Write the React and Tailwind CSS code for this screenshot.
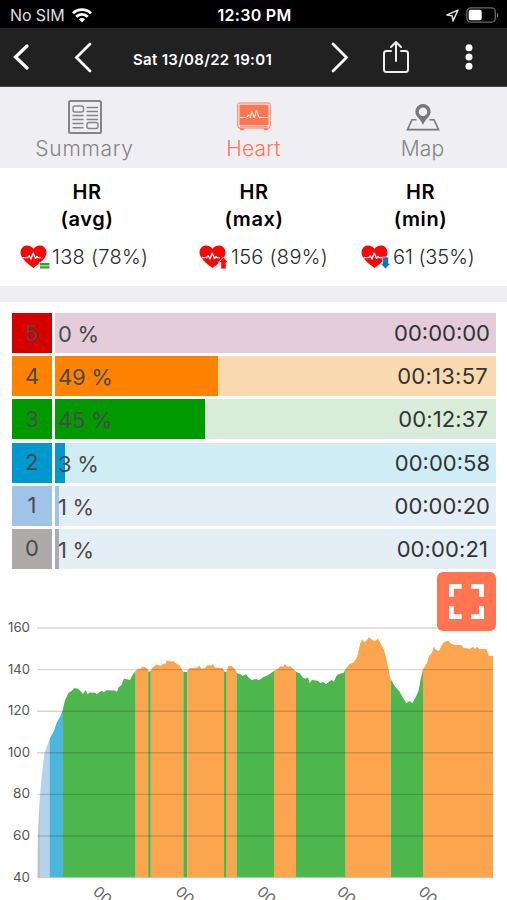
const tabs = [
    { label: 'Summary', Icon: SummaryIcon, tracking: 'tracking-[0.7px]' },
    { label: 'Heart', Icon: MonitorIcon, active: true, tracking: 'tracking-[0.2px]' },
    { label: 'Map', Icon: MapIcon, tracking: 'tracking-[0.2px]' },
];

const stats = [
    { name: '(avg)', value: '138 (78%)', kind: 'avg', box: 'w-[174px]', row: 'pl-5', tracking: 'tracking-[0.3px]' },
    { name: '(max)', value: '156 (89%)', kind: 'max', box: 'w-[160px]', row: 'pl-[25px]', tracking: 'tracking-[0.3px]' },
    { name: '(min)', value: '61 (35%)', kind: 'min', box: 'w-[173px]', row: 'pl-[27px]', tracking: 'tracking-[-0.05px]' },
];

const zones = [
    { id: 5, percent: 0, time: '00:00:00', badge: 'bg-[#d50000]', track: 'bg-[#e4ccda]', fill: 0, pad: 'pr-[6px]' },
    { id: 4, percent: 49, time: '00:13:57', badge: 'bg-[#ff8200]', track: 'bg-[#f9dab0]', fill: 163, pad: 'pr-[8px] tracking-[0.25px]' },
    { id: 3, percent: 45, time: '00:12:37', badge: 'bg-[#009a00]', track: 'bg-[#d8ecd8]', fill: 150, pad: 'pr-[8px] tracking-[0.1px]' },
    { id: 2, percent: 3, time: '00:00:58', badge: 'bg-[#0099cf]', track: 'bg-[#d0edf6]', fill: 10, pad: 'pr-[6px]' },
    { id: 1, percent: 1, time: '00:00:20', badge: 'bg-[#9fc4e8]', track: 'bg-[#e3eef5]', fill: 3.5, pad: 'pr-[6px]' },
    { id: 0, percent: 1, time: '00:00:21', badge: 'bg-[#aeaaaa]', track: 'bg-[#e3eef5]', fill: 3.5, pad: 'pr-[8px] tracking-[0.1px]' },
];

const GREEN = '#4db64c';
const ORANGE = '#fca54f';

// [start, end, colour] of every heart rate zone along the time axis
const segments = [
    [37, 40, '#bfc2c6'],
    [40, 49.5, '#b7d3ec'],
    [49.5, 63, '#4cb6dc'],
    [63, 135.7, GREEN],
    [135.7, 148.2, ORANGE],
    [148.2, 150.8, GREEN],
    [150.8, 183.3, ORANGE],
    [183.3, 187.3, GREEN],
    [187.3, 224, ORANGE],
    [224, 226.7, GREEN],
    [226.7, 236.5, ORANGE],
    [236.5, 274, GREEN],
    [274, 296, ORANGE],
    [296, 345.7, GREEN],
    [345.7, 390.7, ORANGE],
    [390.7, 423, GREEN],
    [423, 493.3, ORANGE],
];

const curve = `37.5,877.5 37.8,840 38.6,820 40,796 42,773 44.5,753 47,746 50,738 54,731 56.5,723 60,717 62.7,710
65,700 68.5,693 71.5,691 74,688.3 77.5,688.5 80,690.5 83,694 85.5,690 87.5,694 90,692.5 95,692.7 97,694
101.5,690.8 104,692 106.7,690.3 115,690.5 117,692 118.7,687.3 121.5,685 124,678.5 130,680 132.5,675
135.7,670.7 138.5,668.7 140.7,668.5 142.7,666.5 147.3,668.3 148.7,672 150.7,671 152.7,667.3 156.7,664.5
160.7,665.7 163.3,664 165.7,663.5 166.7,660.3 169.3,661.3 174,661.5 176.7,664 179.3,665 183.3,671.7
186.7,672 189.5,668.3 196.7,667.7 199.3,665.7 201.7,668.7 205,668 207.3,665.3 211.7,665.5 213,664
215,667.5 222.7,668 224.7,672 226.7,671.5 228.3,666 231.7,666 235,669.3 237.3,673.3 240.7,674.3
242.7,676 246,674.3 248.3,677.3 251.7,680 256.3,679 259,680.3 263,677.3 268,675.3 273.7,671 278,669
280.3,666 283,666.7 284.7,664.3 287.7,666.7 290.3,666 293,668.7 296.3,672 299.7,673.3 303,677.7
305.7,678.7 308,677.3 309.7,683.3 311.7,680 318,680.7 320.3,683.3 323,682 326.3,684 329.7,681 331.7,680
333.7,681.7 337,675 341.3,673.3 343.7,672.7 345.7,668.7 349.7,664 353.7,662.3 357,657.3 360.3,643.3
362.3,639.3 364,642.3 366.3,641 369,637.3 372.3,640 375,641 377.7,638.7 380.3,642.7 383.7,649.3
386.3,658.3 390.3,678.3 394.7,686 399.7,691.7 403,697.7 406.3,703 409.7,701 412.3,703.3 416.3,696
418.7,690 420.7,679.3 423,669.3 427,662.7 429,656 432,652.7 434,646.7 436.3,650 439,651 441.3,646
443.7,642.3 448,640.7 451.3,643.7 454.7,645 461.3,645 463.7,648 469.7,648.7 473,647 475,649 477,646.7
479.7,649 486.3,649 489,656 493.3,655.7 493.3,877.5`;

const yTicks = [
    [160, 628],
    [140, 669.6],
    [120, 711.2],
    [100, 752.8],
    [80, 794.4],
    [60, 836],
    [40, 877.6],
];

const xTicks = [92, 174.5, 256, 336, 417.5];

function SummaryIcon() {
    return (
        <svg className="w-[34px] h-[34px]" viewBox="0 0 34 34" fill="none" stroke="#858585">
            <rect x="1" y="1" width="32" height="32" rx="1.5" strokeWidth="2" />
            <rect x="5" y="6" width="10.5" height="6" rx="2" strokeWidth="1.4" />
            <rect x="19" y="22.5" width="11" height="6" rx="2" strokeWidth="1.4" />
            <path strokeWidth="1.4" d="M4.500 15.500h11M4.500 19.500h11M4.500 23.500h11M4.500 27.800h11M18.500 7.500h11.500M18.500 11.500h11.500M18.500 15.500h11.500M18.500 19.500h11.500" />
        </svg>
    );
}

function MonitorIcon() {
    return (
        <svg className="w-[34px] h-[30px]" viewBox="0 0 34 30" fill="none">
            <rect x="0.8" y="1" width="32.4" height="25" rx="1.5" stroke="#ff7552" strokeWidth="1" />
            <rect x="2.500" y="2.700" width="29" height="20.500" fill="#ff7552" />
            <path d="M3 24.600h28" stroke="#ff7552" strokeWidth="0.8" />
            <path d="M2.500 26.300h5l-1 2h-3zM26.500 26.300h5l-1 2h-3z" fill="#ff7552" />
            <path d="M3 15.500h7l1.500-2.800 1.700 3.300 1.700-6.500 2.400 6.500 2.200-8 2.500 7.500H31" stroke="#fff" strokeWidth="1" />
        </svg>
    );
}

function MapIcon() {
    return (
        <svg className="w-[34px] h-[27px]" viewBox="0 0 34 27" fill="none">
            <path d="M10.500 15.700H6L1.400 25.600h31.200L28 15.700h-4.500" stroke="#777" strokeWidth="1.600" />
            <path
                fillRule="evenodd"
                fill="#777"
                d="M17 0a7.600 7.600 0 0 0-7.600 7.700c0 4.800 5.300 7 7.600 13.300 2.300-6.300 7.600-8.500 7.600-13.300A7.600 7.700 0 0 0 17 0Zm0 3.400a4.300 4.300 0 1 1 0 8.600 4.300 4.300 0 0 1 0-8.600Z"
            />
        </svg>
    );
}

function HeartIcon({ kind }) {
    return (
        <svg className="w-[30px] h-6 shrink-0" viewBox="0 0 30 24" fill="none">
            <path
                fill="#f80808"
                d="M13.500 23C10.500 20.500.5 14.500.5 7.500.5 3.200 3.500.500 7 .500c3 0 5.200 1.300 6.500 3.200C14.800 1.800 17 .500 20 .500c3.500 0 6.500 2.700 6.500 7 0 7-10 13-13 15.500Z"
            />
            <path
                stroke="#fff"
                strokeWidth="1.300"
                strokeLinejoin="round"
                d="M2.500 12.700h5l1.800-2 1.700 3.300 2.200-6 2.300 5.500 1.500-2 1.200 1.200H21"
            />
            {kind === 'avg' && (
                <>
                    <path d="M19 17h11v7H19z" fill="#fff" />
                    <path d="M20 18h9.500v2.400H20zM20 21.200h9.500v2.400H20z" fill="#2ca62c" />
                </>
            )}
            {kind === 'max' && <path d="M24.500 12l5 5.500h-2.300V24h-5.400v-6.500h-2.300z" fill="#f80808" stroke="#fff" strokeWidth="0.800" />}
            {kind === 'min' && <path d="M24.500 24l-5-5.500h2V12h6v6.500h2z" fill="#0a75c2" stroke="#fff" strokeWidth="0.600" />}
        </svg>
    );
}

function StatusBar() {
    return (
        <div className="h-7 bg-black text-white flex items-center pt-[2px] pl-[10px] pr-2">
            <div className="flex-1 flex items-center gap-[7px]">
                <span className="text-[16px] leading-none tracking-[-0.1px] text-[#dedede]">No SIM</span>
                <svg className="w-5 h-[15px]" viewBox="0 0 20 15" fill="none" stroke="#fff" strokeWidth="2.800">
                    <path d="M1 5.200C6 .3 14 .3 19 5.200" />
                    <path d="M4.200 8.700c3.300-3.100 8.300-3.100 11.600 0" />
                    <path d="M7 11.300c1.700-1.600 4.300-1.600 6 0L10 14.400z" fill="#fff" stroke="none" />
                </svg>
            </div>
            <span className="text-[16px] leading-none font-semibold tracking-[0.3px]">12:30 PM</span>
            <div className="flex-1 flex items-center justify-end gap-[7px]">
                <svg className="w-[13px] h-[13px]" viewBox="0 0 12 12" fill="none" stroke="#ddd" strokeWidth="1.400" strokeLinejoin="round">
                    <path d="M11 1 .9 5.500l4.800.8.800 4.800z" />
                </svg>
                <svg className="w-[33px] h-4" viewBox="0 0 33 16" fill="none">
                    <rect x="0.800" y="0.800" width="28.500" height="14.400" rx="4" stroke="#6b6b6b" strokeWidth="1.300" />
                    <rect x="2.700" y="2.700" width="13" height="10.600" rx="2" fill="#fff" />
                    <path d="M31 5.500c1.600.8 1.600 4.200 0 5z" fill="#777" />
                </svg>
            </div>
        </div>
    );
}

function Header() {
    return (
        <div className="h-[59px] bg-[#212121] border-b border-[#49474c] flex items-center pl-[13px] text-white">
            <svg className="w-4 h-[26px]" viewBox="0 0 16 26" fill="none" stroke="#fff" strokeWidth="3.200" strokeLinecap="round">
                <path d="M14 2 2.500 13 14 24" />
            </svg>
            <svg className="ml-[45px] w-[18px] h-8" viewBox="0 0 18 32" fill="none" stroke="#fff" strokeWidth="2.800" strokeLinecap="round">
                <path d="M16 3 2.500 16.500 16 30" />
            </svg>
            <span className="ml-[41px] mt-[5px] w-[144px] whitespace-nowrap text-[15px] leading-5 font-semibold tracking-[0.3px]">
                Sat 13/08/22 19:01
            </span>
            <svg className="ml-[54px] w-[18px] h-8" viewBox="0 0 18 32" fill="none" stroke="#fff" strokeWidth="2.800" strokeLinecap="round">
                <path d="M2 3l13.500 13.500L2 30" />
            </svg>
            <svg className="ml-[33px] w-7 h-[34px]" viewBox="0 0 28 34" fill="none" stroke="#eee" strokeWidth="2" strokeLinecap="round" strokeLinejoin="round">
                <path d="M9 11H4.500Q2 11 2 13.500v16Q2 32 4.500 32h19q2.500 0 2.500-2.500v-16q0-2.500-2.500-2.500H19" />
                <path d="M14 21V2M9 7l5-5 5 5" />
            </svg>
            <svg className="ml-[55px] w-2 h-[26px]" viewBox="0 0 8 26" fill="#fff">
                <circle cx="4" cy="3.700" r="3.500" />
                <circle cx="4" cy="13" r="3.500" />
                <circle cx="4" cy="22.300" r="3.500" />
            </svg>
        </div>
    );
}

function TabBar() {
    return (
        <div className="h-[81px] bg-[#efeef3] grid grid-cols-3">
            {tabs.map(({ label, Icon, active, tracking }) => (
                <div key={label} className="flex flex-col items-center pt-[13px]">
                    <div className="h-[34px] flex items-center justify-center">
                        <Icon />
                    </div>
                    <span
                        className={`mt-[3px] text-center whitespace-nowrap text-[21px] leading-6 font-light ${tracking} ${
                            active ? 'text-[#ff7552]' : 'text-[#858585]'
                        }`}
                    >
                        {label}
                    </span>
                </div>
            ))}
        </div>
    );
}

function HeartStats() {
    return (
        <div className="h-[118px] bg-white flex pt-[11px]">
            {stats.map((s) => (
                <div key={s.name} className={s.box}>
                    <div className="text-center text-[20px] leading-[26.5px] font-semibold tracking-[0.6px] text-black">
                        HR
                        <br />
                        {s.name}
                    </div>
                    <div className={`flex items-center mt-[12px] ${s.row}`}>
                        <HeartIcon kind={s.kind} />
                        <span className={`ml-[2px] mt-px whitespace-nowrap text-[20px] leading-6 font-light text-[#2b2b2b] ${s.tracking}`}>
                            {s.value}
                        </span>
                    </div>
                </div>
            ))}
        </div>
    );
}

function ZoneTable() {
    return (
        <div className="pt-[11px] pl-3 pr-[11px] flex flex-col gap-[3.2px] text-[#4a4a4a]">
            {zones.map((z) => (
                <div key={z.id} className="h-10 flex gap-[3px]">
                    <div className={`w-10 flex items-center justify-center text-[22px] ${z.badge}`}>{z.id}</div>
                    <div className={`flex-1 grid ${z.track}`}>
                        <div className={`col-start-1 row-start-1 ${z.badge}`} style={{ width: z.fill }}></div>
                        <div className={`col-start-1 row-start-1 flex items-center justify-between pl-[3px] text-[22px] ${z.pad}`}>
                            <span className="pt-[3px] tracking-[-0.3px]">{z.percent} %</span>
                            <span className="pt-px text-[#333]">{z.time}</span>
                        </div>
                    </div>
                </div>
            ))}
        </div>
    );
}

function HeartChart() {
    return (
        <div className="relative h-[331px]">
            <svg className="block w-[507px] h-[331px]" viewBox="0 569 507 331">
                <clipPath id="curve">
                    <polygon points={curve} />
                </clipPath>
                <g clipPath="url(#curve)">
                    {segments.map(([from, to, color]) => (
                        <rect key={from} x={from} y="600" width={to - from} height="277.5" fill={color} />
                    ))}
                </g>
                {yTicks.map(([value, y]) => (
                    <g key={value}>
                        <path d={`M37 ${y}H493.5`} stroke="#000" strokeOpacity="0.16" strokeWidth="1.4" />
                        <text x="30" y={y + 4} textAnchor="end" fontSize="13.5" fill="#555" textLength={value > 99 ? 22 : 17} lengthAdjust="spacingAndGlyphs">
                            {value}
                        </text>
                    </g>
                ))}
                {xTicks.map((x) => (
                    <text key={x} transform={`translate(${x} 893) rotate(42)`} fontSize="15" fill="#666">
                        00
                    </text>
                ))}
            </svg>
            <button className="absolute top-[3px] right-[11px] w-[59px] h-[59px] rounded-[6px] bg-[#ff7552] flex items-center justify-center">
                <svg className="w-[35px] h-[35px]" viewBox="0 0 35 35" fill="none" stroke="#fff" strokeWidth="4.8">
                    <path d="M2.400 12.700V2.400h10.300M22.300 2.400h10.300v10.300M32.600 22.300v10.300H22.300M12.700 32.600H2.400V22.300" />
                </svg>
            </button>
        </div>
    );
}

export default function App() {
    return (
        <div className="w-[507px] h-[900px] overflow-hidden bg-white font-['Inter','Liberation_Sans',sans-serif]">
            <StatusBar />
            <Header />
            <TabBar />
            <HeartStats />
            <div className="h-4 bg-[#efeef3]"></div>
            <ZoneTable />
            <HeartChart />
        </div>
    );
}
